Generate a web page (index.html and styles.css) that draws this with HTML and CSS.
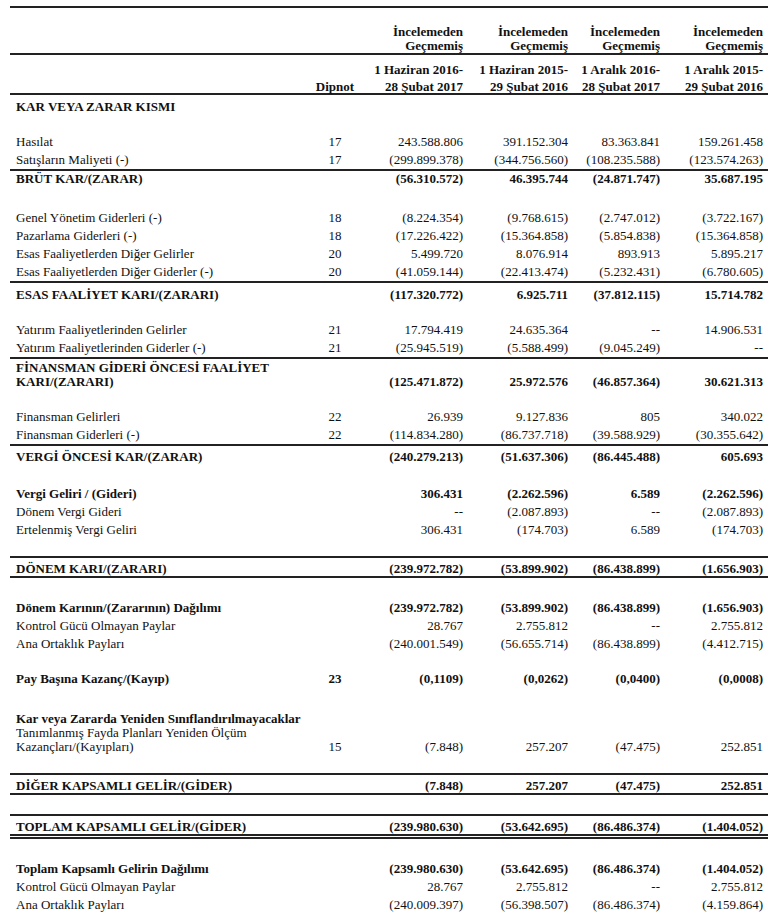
FILE: index.html
```html
<!DOCTYPE html>
<html lang="tr">
<head>
<meta charset="utf-8">
<title>Kar veya Zarar Tablosu</title>
<link rel="stylesheet" href="styles.css">
</head>
<body>
<div class="statement">
  <div class="row head head1">
    <div></div><div></div>
    <div>İncelemeden<br>Geçmemiş</div>
    <div>İncelemeden<br>Geçmemiş</div>
    <div>İncelemeden<br>Geçmemiş</div>
    <div>İncelemeden<br>Geçmemiş</div>
  </div>
  <div class="row head head2">
    <div></div>
    <div class="note-head"><br>Dipnot</div>
    <div>1 Haziran 2016-<br>28 Şubat 2017</div>
    <div>1 Haziran 2015-<br>29 Şubat 2016</div>
    <div>1 Aralık 2016-<br>28 Şubat 2017</div>
    <div>1 Aralık 2015-<br>29 Şubat 2016</div>
  </div>

  <div class="row title"><div>KAR VEYA ZARAR KISMI</div></div>

  <div class="row mt17"><div>Hasılat</div><div>17</div><div>243.588.806</div><div>391.152.304</div><div>83.363.841</div><div>159.261.458</div></div>
  <div class="row"><div>Satışların Maliyeti (-)</div><div>17</div><div>(299.899.378)</div><div>(344.756.560)</div><div>(108.235.588)</div><div>(123.574.263)</div></div>
  <div class="row total pt1"><div>BRÜT KAR/(ZARAR)</div><div></div><div>(56.310.572)</div><div>46.395.744</div><div>(24.871.747)</div><div>35.687.195</div></div>

  <div class="row mt23"><div>Genel Yönetim Giderleri (-)</div><div>18</div><div>(8.224.354)</div><div>(9.768.615)</div><div>(2.747.012)</div><div>(3.722.167)</div></div>
  <div class="row"><div>Pazarlama Giderleri (-)</div><div>18</div><div>(17.226.422)</div><div>(15.364.858)</div><div>(5.854.838)</div><div>(15.364.858)</div></div>
  <div class="row"><div>Esas Faaliyetlerden Diğer Gelirler</div><div>20</div><div>5.499.720</div><div>8.076.914</div><div>893.913</div><div>5.895.217</div></div>
  <div class="row"><div>Esas Faaliyetlerden Diğer Giderler (-)</div><div>20</div><div>(41.059.144)</div><div>(22.413.474)</div><div>(5.232.431)</div><div>(6.780.605)</div></div>
  <div class="row total pt5"><div>ESAS FAALİYET KARI/(ZARARI)</div><div></div><div>(117.320.772)</div><div>6.925.711</div><div>(37.812.115)</div><div>15.714.782</div></div>

  <div class="row mt19"><div>Yatırım Faaliyetlerinden Gelirler</div><div>21</div><div>17.794.419</div><div>24.635.364</div><div>--</div><div>14.906.531</div></div>
  <div class="row"><div>Yatırım Faaliyetlerinden Giderler (-)</div><div>21</div><div>(25.945.519)</div><div>(5.588.499)</div><div>(9.045.249)</div><div>--</div></div>
  <div class="row total pt2"><div>FİNANSMAN GİDERİ ÖNCESİ FAALİYET<br>KARI/(ZARARI)</div><div></div><div>(125.471.872)</div><div>25.972.576</div><div>(46.857.364)</div><div>30.621.313</div></div>

  <div class="row mt19"><div>Finansman Gelirleri</div><div>22</div><div>26.939</div><div>9.127.836</div><div>805</div><div>340.022</div></div>
  <div class="row"><div>Finansman Giderleri (-)</div><div>22</div><div>(114.834.280)</div><div>(86.737.718)</div><div>(39.588.929)</div><div>(30.355.642)</div></div>
  <div class="row total pt4"><div>VERGİ ÖNCESİ KAR/(ZARAR)</div><div></div><div>(240.279.213)</div><div>(51.637.306)</div><div>(86.445.488)</div><div>605.693</div></div>

  <div class="row b mt21"><div>Vergi Geliri / (Gideri)</div><div></div><div>306.431</div><div>(2.262.596)</div><div>6.589</div><div>(2.262.596)</div></div>
  <div class="row"><div>Dönem Vergi Gideri</div><div></div><div>--</div><div>(2.087.893)</div><div>--</div><div>(2.087.893)</div></div>
  <div class="row"><div>Ertelenmiş Vergi Geliri</div><div></div><div>306.431</div><div>(174.703)</div><div>6.589</div><div>(174.703)</div></div>

  <div class="row total closed pt4 mt17"><div>DÖNEM KARI/(ZARARI)</div><div></div><div>(239.972.782)</div><div>(53.899.902)</div><div>(86.438.899)</div><div>(1.656.903)</div></div>

  <div class="row b mt21"><div>Dönem Karının/(Zararının) Dağılımı</div><div></div><div>(239.972.782)</div><div>(53.899.902)</div><div>(86.438.899)</div><div>(1.656.903)</div></div>
  <div class="row"><div>Kontrol Gücü Olmayan Paylar</div><div></div><div>28.767</div><div>2.755.812</div><div>--</div><div>2.755.812</div></div>
  <div class="row"><div>Ana Ortaklık Payları</div><div></div><div>(240.001.549)</div><div>(56.655.714)</div><div>(86.438.899)</div><div>(4.412.715)</div></div>

  <div class="row b mt17"><div>Pay Başına Kazanç/(Kayıp)</div><div>23</div><div>(0,1109)</div><div>(0,0262)</div><div>(0,0400)</div><div>(0,0008)</div></div>

  <div class="row b sub mt23"><div>Kar veya Zararda Yeniden Sınıflandırılmayacaklar</div></div>
  <div class="row multi"><div>Tanımlanmış Fayda Planları Yeniden Ölçüm<br>Kazançları/(Kayıpları)</div><div>15</div><div>(7.848)</div><div>257.207</div><div>(47.475)</div><div>252.851</div></div>

  <div class="row total closed pt4 mt19"><div>DİĞER KAPSAMLI GELİR/(GİDER)</div><div></div><div>(7.848)</div><div>257.207</div><div>(47.475)</div><div>252.851</div></div>

  <div class="row total grand pt4 mt19"><div>TOPLAM KAPSAMLI GELİR/(GİDER)</div><div></div><div>(239.980.630)</div><div>(53.642.695)</div><div>(86.486.374)</div><div>(1.404.052)</div></div>

  <div class="row b mt21"><div>Toplam Kapsamlı Gelirin Dağılımı</div><div></div><div>(239.980.630)</div><div>(53.642.695)</div><div>(86.486.374)</div><div>(1.404.052)</div></div>
  <div class="row"><div>Kontrol Gücü Olmayan Paylar</div><div></div><div>28.767</div><div>2.755.812</div><div>--</div><div>2.755.812</div></div>
  <div class="row"><div>Ana Ortaklık Payları</div><div></div><div>(240.009.397)</div><div>(56.398.507)</div><div>(86.486.374)</div><div>(4.159.864)</div></div>
</div>
</body>
</html>
```
FILE: styles.css
```css
html, body {
  margin: 0;
  padding: 0;
  background: #ffffff;
}

body {
  color: #111111;
  font-family: "Liberation Serif", "Times New Roman", serif;
  font-size: 13px;
  line-height: 18px;
}

.statement {
  width: 758px;
  margin: 6px 0 0 10px;
}

.row {
  display: grid;
  grid-template-columns: 290px 70px 96px 105px 92px 105px;
  box-sizing: border-box;
  height: 18px;
  line-height: 18px;
  white-space: nowrap;
}

.row > :first-child {
  padding-left: 6px;
}

.row > :nth-child(2) {
  text-align: center;
}

.row > :nth-child(n+3) {
  text-align: right;
  padding-right: 3px;
}

.row > :nth-child(6) {
  padding-right: 5px;
}

.b,
.head,
.title {
  font-weight: bold;
}

.head1 {
  height: 49px;
  border-top: 2px solid #222;
  border-bottom: 2px solid #222;
  line-height: 14px;
  align-items: end;
}

.head2 {
  height: 40px;
  border-bottom: 2px solid #222;
  line-height: 17px;
  align-items: start;
  padding-top: 6px;
}

.title {
  height: auto;
  padding-top: 3px;
}

.total {
  height: auto;
  border-top: 2px solid #222;
  line-height: 14px;
  font-weight: bold;
  align-items: end;
}

.closed {
  border-bottom: 2px solid #222;
}

.grand {
  border-bottom: 5px double #222;
}

.multi {
  height: auto;
  line-height: 14px;
  align-items: end;
}

.sub {
  height: 15px;
  line-height: 15px;
}

.pt1 { padding-top: 1px; }
.pt2 { padding-top: 2px; }
.pt4 { padding-top: 4px; }
.pt5 { padding-top: 5px; }

.mt17 { margin-top: 17px; }
.mt19 { margin-top: 19px; }
.mt21 { margin-top: 21px; }
.mt23 { margin-top: 23px; }
```
